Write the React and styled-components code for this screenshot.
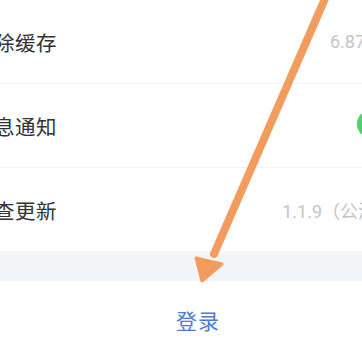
import styled, { createGlobalStyle } from "styled-components";

const GlobalStyle = createGlobalStyle`
  html, body {
    margin: 0;
    padding: 0;
    background: #ffffff;
    overflow: hidden;
  }
  body {
    font-family: "Noto Sans CJK SC", "Noto Sans", sans-serif;
  }
`;

const Page = styled.div`
  position: relative;
  width: 362px;
  height: 338px;
  overflow: hidden;
  background: #ffffff;
`;

const Screen = styled.div`
  margin-left: -24px;
  width: 444px;
  display: flex;
  flex-direction: column;
`;

const Row = styled.div`
  height: 83px;
  display: flex;
  align-items: center;
  justify-content: space-between;
  padding: 0 14px 0 0;
  border-bottom: ${(props) => (props.last ? "none" : "1px solid #f2f2f2")};
  box-sizing: content-box;
`;

const Label = styled.span`
  font-size: 20.5px;
  color: #333333;
  letter-spacing: 0.5px;
  margin-left: -3px;
`;

const Value = styled.span`
  font-family: Roboto, "Noto Sans CJK SC", sans-serif;
  font-size: 18px;
  color: #c4c4c4;
  margin-right: ${(props) => props.offset || 0}px;
`;

const Toggle = styled.div`
  width: 52px;
  height: 28px;
  border-radius: 14px;
  background: #4cd26b;
  margin-top: -3px;
  margin-right: -3px;
`;

const Band = styled.div`
  height: 30px;
  background: #f3f4f6;
`;

const Login = styled.div`
  height: 82px;
  display: flex;
  align-items: center;
  justify-content: center;
  padding-bottom: 4px;
  box-sizing: border-box;
  font-size: 21px;
  color: #4a7bd4;
  letter-spacing: 1px;
`;

const Arrow = styled.svg`
  position: absolute;
  left: 0;
  top: 0;
  pointer-events: none;
`;

export default function App() {
  return (
    <Page>
      <GlobalStyle />
      <Screen>
        <Row>
          <Label>清除缓存</Label>
          <Value offset={14}>6.87MB</Value>
        </Row>
        <Row>
          <Label>消息通知</Label>
          <Toggle />
        </Row>
        <Row last>
          <Label>检查更新</Label>
          <Value offset={-6}>1.1.9（公测版）</Value>
        </Row>
        <Band />
        <Login>登录</Login>
      </Screen>
      <Arrow width="362" height="338" viewBox="0 0 362 338">
        <path
          d="M327 -6 L214 254"
          stroke="#f29c5e"
          strokeWidth="8"
          strokeLinecap="round"
          fill="none"
        />
        <path d="M196 258 L202 281 L222 264 Z" fill="#f29c5e" stroke="#f29c5e" strokeWidth="3" strokeLinejoin="round" />
      </Arrow>
    </Page>
  );
}
